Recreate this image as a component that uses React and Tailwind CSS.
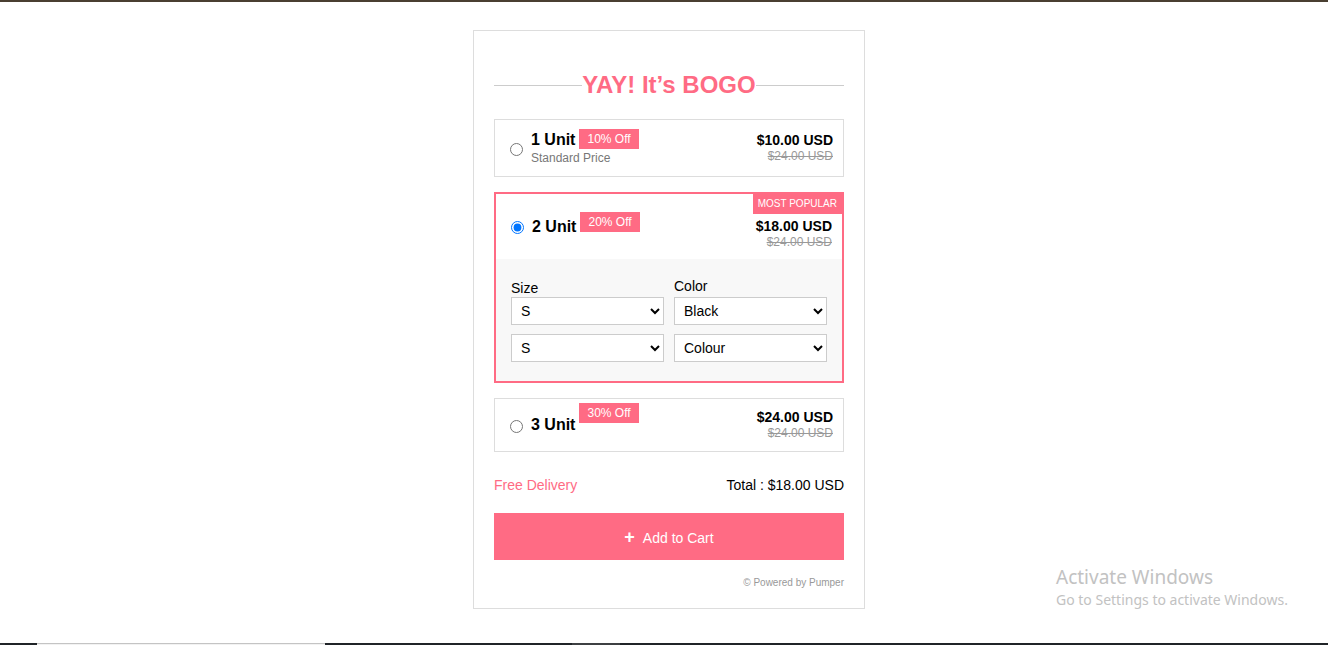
import React, { useState } from 'react';

const PINK = 'bg-[#ff6b84]';

const options = [
  { id: 1, label: '1 Unit', off: '10% Off', sub: 'Standard Price', price: '$10.00 USD', was: '$24.00 USD', lift: 'top-[-1px]' },
  { id: 2, label: '2 Unit', off: '20% Off', price: '$18.00 USD', was: '$24.00 USD', lift: 'top-[-5px]', popular: true },
  { id: 3, label: '3 Unit', off: '30% Off', price: '$24.00 USD', was: '$24.00 USD', lift: 'top-[-12px]' }
];

function Badge({ text, lift }) {
  return (
    <span className={`relative ${lift} ml-[4px] ${PINK} text-white text-[12px] leading-[20px] px-[8px]`}>
      {text}
    </span>
  );
}

function Prices({ price, was }) {
  return (
    <div className="text-right">
      <div className="text-[14px] font-bold leading-[16px] text-black">{price}</div>
      <div className="text-[12px] leading-[16px] text-[#999] line-through">{was}</div>
    </div>
  );
}

function Picker({ value, items }) {
  return (
    <select
      defaultValue={value}
      className="w-full h-[28px] bg-white border border-[#ccc] px-[5px] text-[14px] text-black"
    >
      {items.map(i => <option key={i}>{i}</option>)}
    </select>
  );
}

export default function App() {
  const [picked, setPicked] = useState(2);

  return (
    <div className="relative h-[645px] bg-white flex flex-col overflow-hidden font-['Liberation_Sans',Arial,sans-serif]">
      <div className="h-[2px] bg-[#4a3f31]" />

      <div className="flex-1 flex justify-center pl-[10px] pt-[28px]">
        <div className="w-[392px] h-[579px] border border-[#ddd] px-[20px] pt-[40px]">
          {/* Title */}
          <div className="flex items-center">
            <div className="flex-1 h-px bg-[#ccc]" />
            <h2 className="text-[24px] leading-[28px] font-bold text-[#ff6b84]">YAY! It’s BOGO</h2>
            <div className="flex-1 h-px bg-[#ccc]" />
          </div>

          {/* Options */}
          <div className="mt-[20px] flex flex-col gap-[15px]">
            {options.map(o => {
              const active = picked === o.id;
              if (o.popular) {
                return (
                  <div key={o.id} className={`relative border-2 ${active ? 'border-[#ff6b84]' : 'border-[#ddd]'}`}>
                    <span className={`absolute top-0 right-0 ${PINK} text-white text-[10px] leading-[20px] px-[5px] uppercase`}>
                      Most Popular
                    </span>
                    <label className="h-[65px] flex items-center pl-[15px] pr-[10px] cursor-pointer">
                      <input type="radio" name="bogo" checked={active} onChange={() => setPicked(o.id)} className="w-[13px] h-[13px] mt-[2px]" />
                      <div className="ml-[8px] flex items-center">
                        <span className="text-[16px] font-bold leading-[20px] text-black">{o.label}</span>
                        <Badge text={o.off} lift={o.lift} />
                      </div>
                      <div className="ml-auto mt-[14px]">
                        <Prices price={o.price} was={o.was} />
                      </div>
                    </label>
                    <div className="bg-[#f8f8f8] px-[15px] pt-[19px] pb-[19px] grid grid-cols-2 gap-x-[10px]">
                      <div className="flex flex-col">
                        <span className="text-[14px] leading-[17px] text-black pt-[2px]">Size</span>
                        <Picker value="S" items={['S', 'M', 'L', 'XL']} />
                        <div className="mt-[9px]"><Picker value="S" items={['S', 'M', 'L', 'XL']} /></div>
                      </div>
                      <div className="flex flex-col">
                        <span className="text-[14px] leading-[17px] text-black mb-[2px]">Color</span>
                        <Picker value="Black" items={['Black', 'White', 'Red']} />
                        <div className="mt-[9px]"><Picker value="Colour" items={['Colour', 'Black', 'White', 'Red']} /></div>
                      </div>
                    </div>
                  </div>
                );
              }
              return (
                <label key={o.id} className="border border-[#ddd] flex items-center py-[10px] pl-[15px] pr-[10px] cursor-pointer">
                  <input type="radio" name="bogo" checked={active} onChange={() => setPicked(o.id)} className="w-[13px] h-[13px] mt-[2px]" />
                  <div className="ml-[8px]">
                    <div className="flex items-center">
                      <span className="text-[16px] font-bold leading-[20px] text-black">{o.label}</span>
                      <Badge text={o.off} lift={o.lift} />
                    </div>
                    {o.sub && <div className="text-[12px] leading-[16px] text-[#777]">{o.sub}</div>}
                  </div>
                  <div className="ml-auto">
                    <Prices price={o.price} was={o.was} />
                  </div>
                </label>
              );
            })}
          </div>

          {/* Summary */}
          <div className="mt-[25px] flex justify-between text-[14px] leading-[17px]">
            <span className="text-[#ff6b84]">Free Delivery</span>
            <span className="text-black">Total : $18.00 USD</span>
          </div>

          <button className={`mt-[19px] w-full h-[47px] pt-[4px] ${PINK} text-white text-[14px] flex items-center justify-center gap-[8px]`}>
            <span className="text-[18px] font-bold leading-none -mt-[3px]">+</span>
            Add to Cart
          </button>

          <div className="mt-[17px] text-right text-[10px] leading-[12px] text-[#999]">© Powered by Pumper</div>
        </div>
      </div>

      {/* OS watermark */}
      <div className="absolute left-[1056px] top-[564px] text-[#c2c2c2] font-['Noto_Sans','Open_Sans',sans-serif]">
        <div className="text-[19px] leading-[26px]">Activate Windows</div>
        <div className="text-[14px] leading-[19px]">Go to Settings to activate Windows.</div>
      </div>

      {/* taskbar edge */}
      <div className="h-[2px] flex bg-[#202428]">
        <div className="w-[37px]" />
        <div className="w-[288px] bg-[#f2f2f2] border-t border-[#c4c4c4]" />
        <div className="w-[247px]" />
        <div className="w-[48px] bg-[#3d4043]" />
      </div>
    </div>
  );
}
